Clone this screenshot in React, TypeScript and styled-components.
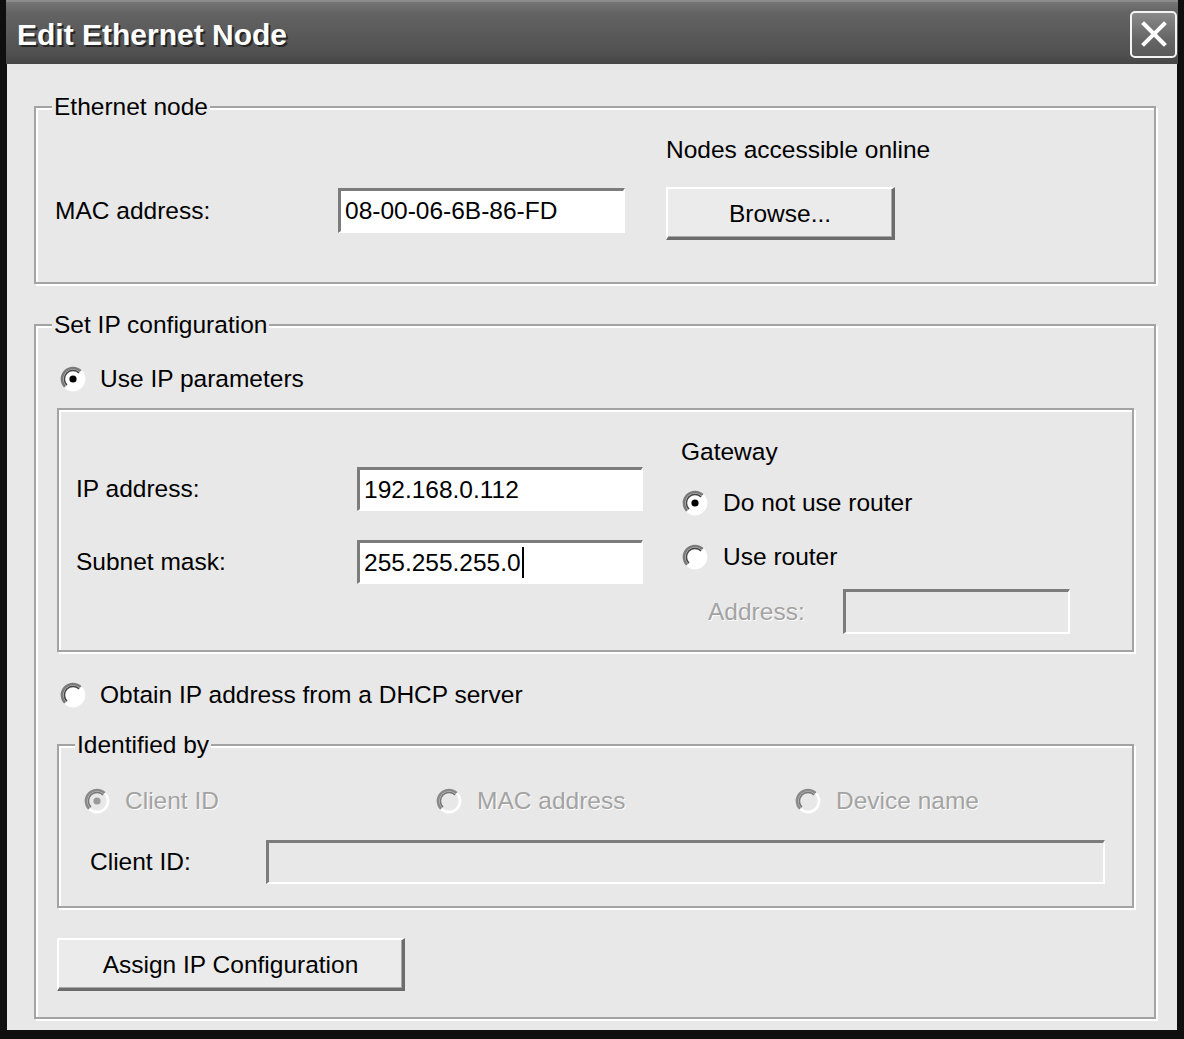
import React from "react";
import styled, { createGlobalStyle } from "styled-components";

const BG = "#e8e8e8";
const FONT = `"Liberation Sans", Arial, sans-serif`;

const GlobalStyle = createGlobalStyle`
  html, body { margin: 0; padding: 0; background: #111; }
  body { font-family: ${FONT}; }
  * { box-sizing: border-box; }
`;

const Window = styled.div`
  width: 1184px;
  height: 1039px;
  display: flex;
  flex-direction: column;
  background: #0f0f0f;
  padding: 0 7px 9px 7px;
`;

const TitleBar = styled.div`
  height: 64px;
  flex: none;
  display: flex;
  align-items: center;
  justify-content: space-between;
  padding: 0 1px 0 11px;
  margin: 0 -1px;
  border-top: 2px solid #8c8c8c;
  background: linear-gradient(
    to bottom,
    #747474 0%,
    #626262 20%,
    #595959 55%,
    #4f4f4f 85%,
    #464646 100%
  );
`;

const TitleText = styled.div`
  font-family: ${FONT};
  font-weight: bold;
  font-size: 30px;
  color: #fff;
  text-shadow: 2px 2px 0 #262626;
  padding-top: 3px;
`;

const CloseButton = styled.div`
  width: 47px;
  height: 47px;
  border: 2px solid #f4f4f4;
  border-radius: 5px;
  background: linear-gradient(to bottom, #8a8a8a, #666 60%, #5a5a5a);
  display: flex;
  align-items: center;
  justify-content: center;
  margin-top: 2px;
`;

const Body = styled.div`
  flex: 1;
  background: ${BG};
  padding: 42px 0 0 27px;
  display: flex;
  flex-direction: column;
  font-family: ${FONT};
  font-size: 24.5px;
  color: #000;
`;

const GroupBox = styled.div<{ $w: number; $h: number; $mt?: number }>`
  position: relative;
  width: ${(p) => p.$w}px;
  height: ${(p) => p.$h}px;
  margin-top: ${(p) => p.$mt ?? 0}px;
  flex: none;
  border: 2px solid #a3a3a3;
  box-shadow: inset 2px 2px 0 #fff, 2px 2px 0 #fff;
`;

const GroupLabel = styled.span`
  position: absolute;
  top: -15px;
  left: 16px;
  padding: 0 2px;
  line-height: 28px;
  background: ${BG};
  white-space: nowrap;
`;

const EthernetGrid = styled.div`
  display: grid;
  grid-template-columns: 283px 328px 229px;
  grid-template-rows: 28px auto;
  row-gap: 23px;
  align-items: start;
  padding: 28px 0 0 19px;
`;

const Text = styled.span<{ $disabled?: boolean; $h?: number }>`
  line-height: ${(p) => p.$h ?? 28}px;
  white-space: nowrap;
  color: ${(p) => (p.$disabled ? "#a3a3a3" : "#000")};
  text-shadow: ${(p) => (p.$disabled ? "1px 1px 0 #fff" : "none")};
`;

const FieldLabel = styled(Text)<{ $mt?: number }>`
  margin-top: ${(p) => p.$mt ?? 0}px;
`;

const Field = styled.div<{ $w: number; $h: number; $mt?: number; $disabled?: boolean }>`
  width: ${(p) => p.$w}px;
  height: ${(p) => p.$h}px;
  margin-top: ${(p) => p.$mt ?? 0}px;
  background: ${(p) => (p.$disabled ? BG : "#fff")};
  border-style: solid;
  border-width: 3px 2px 2px 3px;
  border-color: #7c7c7c #fff #fff #7c7c7c;
  padding: 0 4px;
  display: flex;
  align-items: center;
  white-space: nowrap;
`;

const Caret = styled.span`
  display: inline-block;
  width: 2px;
  height: 31px;
  background: #000;
  margin-left: 1px;
`;

const Button = styled.div<{ $w: number; $h: number; $mt?: number }>`
  width: ${(p) => p.$w}px;
  height: ${(p) => p.$h}px;
  margin-top: ${(p) => p.$mt ?? 0}px;
  flex: none;
  background: #ebebeb;
  border-style: solid;
  border-width: 2px 3px 3px 2px;
  border-color: #fff #6c6c6c #6c6c6c #fff;
  box-shadow: inset -1px -1px 0 #a9a9a9;
  display: flex;
  align-items: center;
  justify-content: center;
  padding-top: 1px;
  white-space: nowrap;
`;

const RadioRow = styled.div<{ $mt?: number; $ml?: number; $gap?: number }>`
  display: flex;
  align-items: center;
  height: 28px;
  margin-top: ${(p) => p.$mt ?? 0}px;
  margin-left: ${(p) => p.$ml ?? 0}px;
  gap: ${(p) => p.$gap ?? 15}px;
`;

const RadioSvg = styled.svg`
  flex: none;
  display: block;
`;

const Radio: React.FC<{ checked?: boolean; disabled?: boolean }> = ({ checked, disabled }) => (
  <RadioSvg width="26" height="26" viewBox="0 0 26 26">
    <circle cx="13" cy="13" r="11" fill={disabled ? BG : "#fff"} />
    <path d="M 5.2 20.8 A 11 11 0 0 1 20.8 5.2" stroke={disabled ? "#8a8a8a" : "#7a7a7a"} strokeWidth="2.6" fill="none" />
    <path d="M 6.9 19.1 A 8.6 8.6 0 0 1 19.1 6.9" stroke={disabled ? "#777" : "#454545"} strokeWidth="1.6" fill="none" />
    <path d="M 20.8 5.2 A 11 11 0 0 1 5.2 20.8" stroke="#fff" strokeWidth="2.6" fill="none" />
    {checked && <circle cx="13" cy="13" r="3.6" fill={disabled ? "#9a9a9a" : "#000"} />}
  </RadioSvg>
);

const GroupContent = styled.div<{ $pt: number; $pl: number }>`
  display: flex;
  flex-direction: column;
  padding: ${(p) => p.$pt}px 0 0 ${(p) => p.$pl}px;
`;

const InnerPanel = styled.div`
  width: 1077px;
  height: 244px;
  margin-top: 15px;
  flex: none;
  border: 2px solid #a3a3a3;
  box-shadow: inset 2px 2px 0 #fff, 2px 2px 0 #fff;
  display: flex;
  padding-left: 17px;
`;

const IpGrid = styled.div`
  display: grid;
  grid-template-columns: 281px 286px;
  row-gap: 29px;
  padding-top: 57px;
  align-content: start;
`;

const GatewayCol = styled.div`
  display: flex;
  flex-direction: column;
  margin-left: 38px;
  padding-top: 28px;
`;

const AddressRow = styled.div`
  display: flex;
  align-items: center;
  margin-top: 18px;
  padding-left: 27px;
`;

const AddressLabel = styled(Text)`
  width: 135px;
`;

const IdentGrid = styled.div`
  display: grid;
  grid-template-columns: 352px 359px auto;
  height: 28px;
  align-items: center;
`;

const ClientRow = styled.div`
  display: flex;
  align-items: center;
  margin-top: 25px;
  padding-left: 6px;
`;

const ClientLabel = styled(Text)`
  width: 176px;
`;

const CloseIcon = () => (
  <svg width="30" height="30" viewBox="0 0 30 30">
    <path d="M5 5 L25 25 M25 5 L5 25" stroke="#fff" strokeWidth="4" strokeLinecap="square" />
  </svg>
);

export default function App() {
  return (
    <>
      <GlobalStyle />
      <Window>
        <TitleBar>
          <TitleText>Edit Ethernet Node</TitleText>
          <CloseButton>
            <CloseIcon />
          </CloseButton>
        </TitleBar>
        <Body>
          <GroupBox $w={1122} $h={178}>
            <GroupLabel>Ethernet node</GroupLabel>
            <EthernetGrid>
              <span />
              <span />
              <Text>Nodes accessible online</Text>
              <FieldLabel $h={45} $mt={1}>MAC address:</FieldLabel>
              <Field $w={287} $h={45} $mt={1}>08-00-06-6B-86-FD</Field>
              <Button $w={229} $h={53}>Browse...</Button>
            </EthernetGrid>
          </GroupBox>

          <GroupBox $w={1122} $h={695} $mt={40}>
            <GroupLabel>Set IP configuration</GroupLabel>
            <GroupContent $pt={39} $pl={21}>
              <RadioRow $ml={3} $gap={14}>
                <Radio checked />
                <Text>Use IP parameters</Text>
              </RadioRow>
              <InnerPanel>
                <IpGrid>
                  <Text $h={44}>IP address:</Text>
                  <Field $w={286} $h={44}>192.168.0.112</Field>
                  <Text $h={44}>Subnet mask:</Text>
                  <Field $w={286} $h={44}>
                    255.255.255.0
                    <Caret />
                  </Field>
                </IpGrid>
                <GatewayCol>
                  <Text>Gateway</Text>
                  <RadioRow $mt={23} $ml={1}>
                    <Radio checked />
                    <Text>Do not use router</Text>
                  </RadioRow>
                  <RadioRow $mt={26} $ml={1}>
                    <Radio />
                    <Text>Use router</Text>
                  </RadioRow>
                  <AddressRow>
                    <AddressLabel $disabled>Address:</AddressLabel>
                    <Field $w={227} $h={45} $disabled />
                  </AddressRow>
                </GatewayCol>
              </InnerPanel>
              <RadioRow $mt={29} $ml={3} $gap={14}>
                <Radio />
                <Text>Obtain IP address from a DHCP server</Text>
              </RadioRow>
              <GroupBox $w={1077} $h={164} $mt={35}>
                <GroupLabel>Identified by</GroupLabel>
                <GroupContent $pt={41} $pl={25}>
                  <IdentGrid>
                    <RadioRow>
                      <Radio checked disabled />
                      <Text $disabled>Client ID</Text>
                    </RadioRow>
                    <RadioRow>
                      <Radio disabled />
                      <Text $disabled>MAC address</Text>
                    </RadioRow>
                    <RadioRow>
                      <Radio disabled />
                      <Text $disabled>Device name</Text>
                    </RadioRow>
                  </IdentGrid>
                  <ClientRow>
                    <ClientLabel>Client ID:</ClientLabel>
                    <Field $w={839} $h={44} $disabled />
                  </ClientRow>
                </GroupContent>
              </GroupBox>
              <Button $w={348} $h={53} $mt={30}>Assign IP Configuration</Button>
            </GroupContent>
          </GroupBox>
        </Body>
      </Window>
    </>
  );
}
